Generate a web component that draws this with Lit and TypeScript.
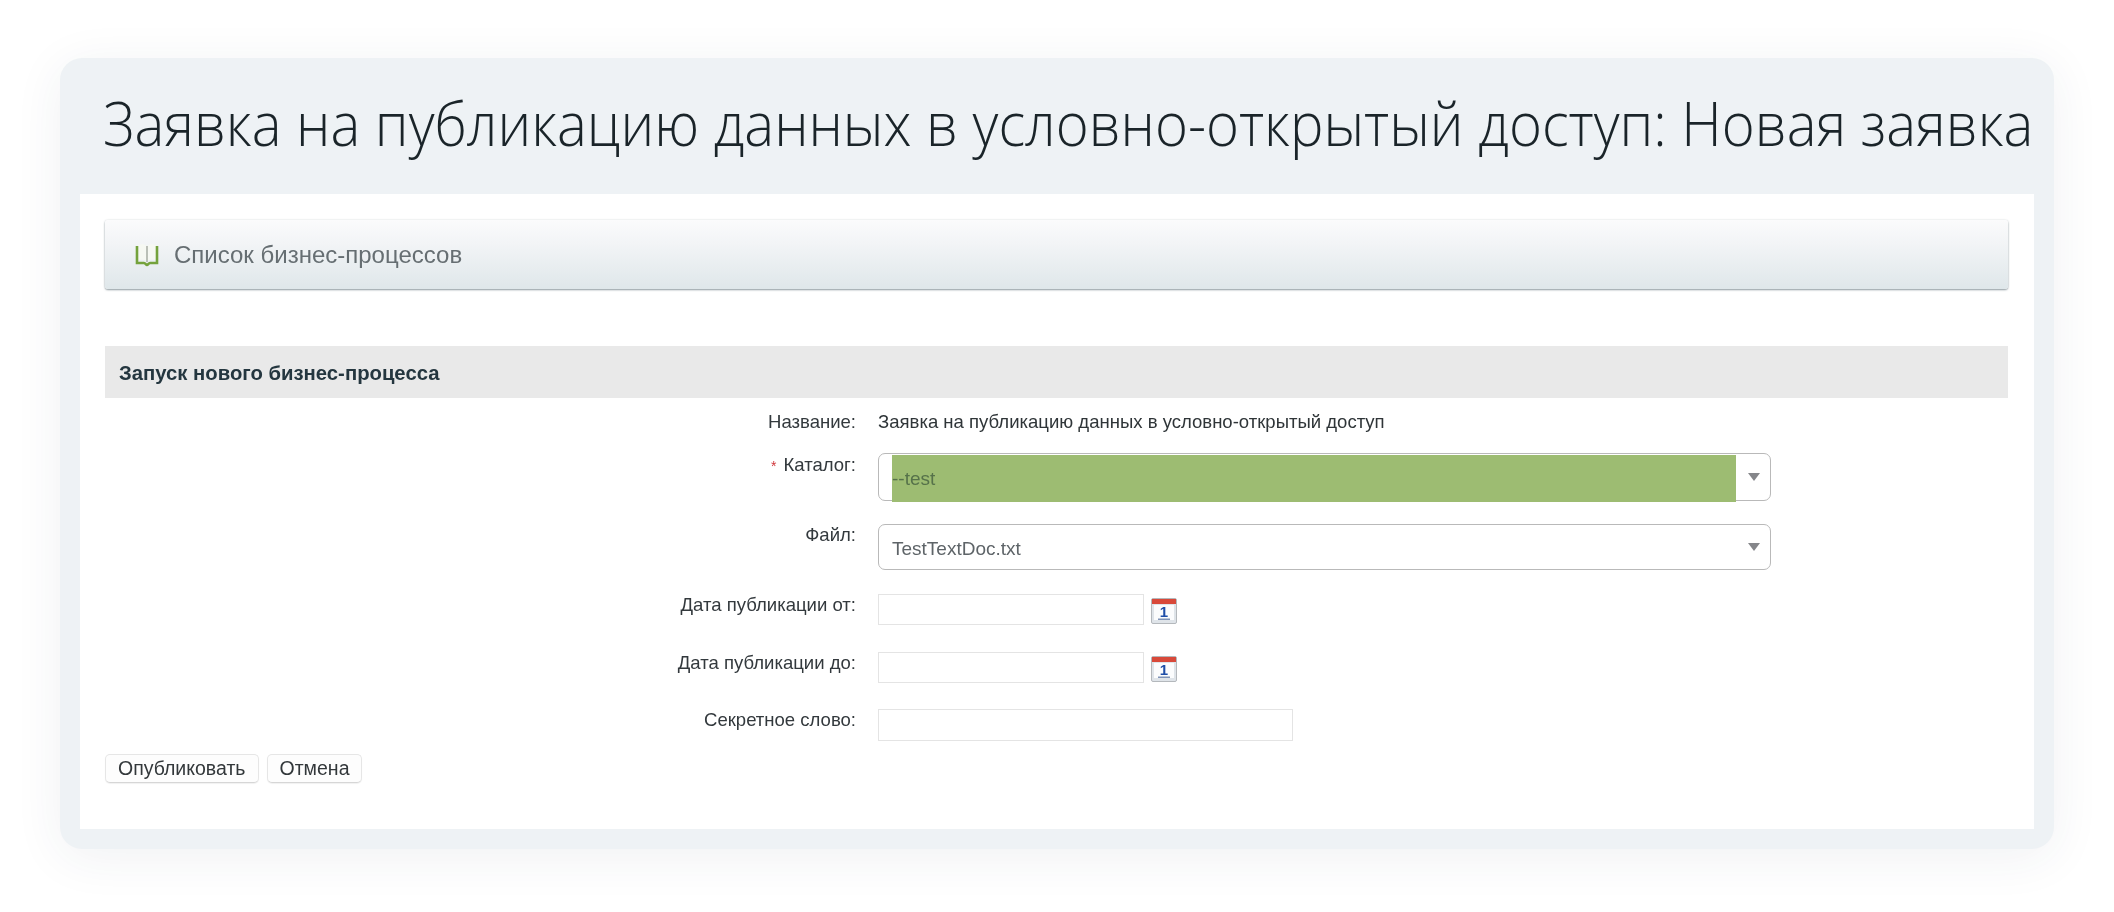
import { LitElement, html, css, svg } from 'lit';
import { customElement } from 'lit/decorators.js';

const bookIcon = svg`
  <svg class="book" viewBox="0 0 26 24" width="26" height="24">
    <path d="M4 2 C7 1 11 1 12.5 3 L12.5 18 C11 16.5 7 16.5 4 17 Z" fill="#f6f8f2" />
    <path d="M22 2 C19 1 15 1 13.5 3 L13.5 18 C15 16.5 19 16.5 22 17 Z" fill="#f6f8f2" />
    <path d="M3 3 V20 H10 C11.5 20 12 22 13 22 C14 22 14.5 20 16 20 H23 V3" fill="none" stroke="#74a23c" stroke-width="2.6" />
    <path d="M13 3 V19" fill="none" stroke="#a3a89d" stroke-width="1.4" />
  </svg>
`;

const calendarIcon = svg`
  <svg class="cal" viewBox="0 0 26 26" width="26" height="26">
    <rect x="0.5" y="0.5" width="25" height="25" rx="1.5" fill="#dfe4e9" stroke="#b4b8bc" />
    <rect x="1" y="1" width="24" height="5" fill="#d8493a" />
    <rect x="3" y="7" width="20" height="15" fill="#fbfcfd" />
    <text x="13" y="19" text-anchor="middle" font-family="Liberation Sans, sans-serif" font-size="15" font-weight="700" fill="#1f4ea8">1</text>
    <rect x="7" y="20.5" width="12" height="1.5" fill="#7f93b8" />
  </svg>
`;

@customElement('app-root')
export class AppRoot extends LitElement {
  static styles = css`
    :host {
      display: block;
      height: 912px;
      background: #fff;
      overflow: hidden;
      font-family: 'Liberation Sans', Arial, sans-serif;
    }

    .card {
      box-sizing: border-box;
      width: 1994px;
      height: 791px;
      margin: 58px 0 0 60px;
      padding: 0 20px 20px;
      background: #eef2f5;
      border-radius: 22px;
      box-shadow: 0 8px 50px rgba(40, 60, 80, 0.07);
      display: flex;
      flex-direction: column;
    }

    .title {
      flex: none;
      height: 136px;
      margin: 0;
      padding-left: 23px;
      font-family: 'Open Sans', sans-serif;
      font-weight: 300;
      font-size: 60px;
      line-height: 130px;
      color: #1a2429;
      white-space: nowrap;
      /* the original face is narrower than Open Sans */
      transform: scaleX(0.9375);
      transform-origin: 23px 0;
      filter: blur(0.4px);
    }

    .panel {
      flex: 1;
      background: #fff;
      padding: 26px 26px 0 25px;
      filter: blur(0.4px);
    }

    .list-bar {
      height: 69px;
      display: flex;
      align-items: center;
      gap: 14px;
      padding-left: 29px;
      box-sizing: border-box;
      border-radius: 3px;
      background: linear-gradient(#fbfbfc, #f2f4f6 35%, #dfe7ea);
      box-shadow: 0 1px 2px rgba(60, 80, 90, 0.55), 0 0 2px rgba(60, 80, 90, 0.15);
      font-size: 24px;
      color: #666e72;
    }

    .book {
      display: block;
    }

    .section-head {
      height: 52px;
      margin-top: 57px;
      padding-left: 14px;
      background: #e9e9e9;
      font-size: 20.3px;
      font-weight: 700;
      line-height: 54px;
      color: #24363f;
    }

    .row {
      display: grid;
      grid-template-columns: 751px 1fr;
      column-gap: 22px;
    }

    .row label {
      text-align: right;
      font-size: 18.55px;
      line-height: 22px;
      color: #33393d;
    }

    .row .req {
      color: #d0363a;
      font-size: 14px;
      margin-right: 2px;
    }

    .row-name {
      height: 55px;
      padding-top: 12px;
      box-sizing: border-box;
    }

    .row-name label,
    .row-name .value {
      line-height: 24px;
    }

    .row-name .value {
      font-size: 18.55px;
      color: #2f3538;
    }

    .row-catalog {
      height: 71px;
    }

    .row-catalog label {
      padding-top: 1px;
    }

    .row-file {
      height: 70px;
    }

    .row-from {
      height: 58px;
    }

    .row-to {
      height: 57px;
    }

    .select {
      position: relative;
      box-sizing: border-box;
      width: 893px;
      height: 46px;
      border: 1.5px solid #b9b9b9;
      border-radius: 7px;
      padding-left: 13px;
      font-size: 19px;
      line-height: 48px;
      color: #5e6468;
      background: #fff;
    }

    .select.picked {
      height: 48px;
    }

    /* highlight lies over the control, a bit outside its border */
    .select .mark {
      position: absolute;
      left: 13px;
      top: 1px;
      width: 844px;
      height: 47px;
      background: #9dbc72;
      color: #56724a;
    }

    .select .arrow {
      position: absolute;
      right: 10px;
      top: 50%;
      margin-top: -4px;
      width: 0;
      height: 0;
      border-left: 6px solid transparent;
      border-right: 6px solid transparent;
      border-top: 8px solid #85868a;
    }

    .date {
      display: flex;
      align-items: flex-start;
      gap: 7px;
    }

    .field {
      box-sizing: border-box;
      display: block;
      width: 266px;
      height: 31px;
      border: 1px solid #e4e4e4;
      background: #fff;
    }

    .field.wide {
      width: 415px;
      height: 32px;
    }

    .cal {
      display: block;
      margin-top: 4px;
    }

    .actions {
      display: flex;
      gap: 8px;
      margin-top: 13px;
    }

    .btn {
      box-sizing: border-box;
      height: 29px;
      padding: 0 12px;
      border: 1px solid #e6e6e6;
      border-bottom-color: #d6d6d6;
      border-radius: 5px;
      background: #fdfdfd;
      box-shadow: 0 1px 1px rgba(0, 0, 0, 0.06);
      font-family: inherit;
      font-size: 19.5px;
      line-height: 27px;
      color: #33383b;
    }
  `;

  render() {
    return html`
      <div class="card">
        <h1 class="title">Заявка на публикацию данных в условно-открытый доступ: Новая заявка</h1>
        <div class="panel">
          <div class="list-bar">${bookIcon}<span>Список бизнес-процессов</span></div>
          <div class="section-head">Запуск нового бизнес-процесса</div>

          <div class="row row-name">
            <label>Название:</label>
            <div class="value">Заявка на публикацию данных в условно-открытый доступ</div>
          </div>
          <div class="row row-catalog">
            <label><span class="req">*</span> Каталог:</label>
            <div class="select picked"><div class="mark">--test</div><span class="arrow"></span></div>
          </div>
          <div class="row row-file">
            <label>Файл:</label>
            <div class="select">TestTextDoc.txt<span class="arrow"></span></div>
          </div>
          <div class="row row-from">
            <label>Дата публикации от:</label>
            <div class="date"><span class="field"></span>${calendarIcon}</div>
          </div>
          <div class="row row-to">
            <label>Дата публикации до:</label>
            <div class="date"><span class="field"></span>${calendarIcon}</div>
          </div>
          <div class="row">
            <label>Секретное слово:</label>
            <div><span class="field wide"></span></div>
          </div>

          <div class="actions">
            <button class="btn">Опубликовать</button>
            <button class="btn">Отмена</button>
          </div>
        </div>
      </div>
    `;
  }
}
